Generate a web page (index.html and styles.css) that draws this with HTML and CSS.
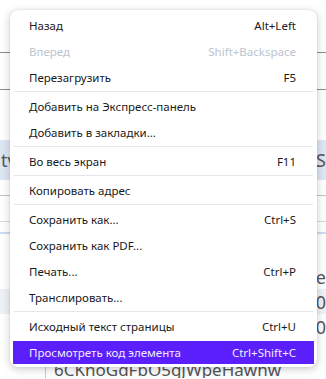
FILE: index.html
```html
<!DOCTYPE html>
<html lang="ru">
<head>
    <meta charset="UTF-8">
    <meta name="viewport" content="width=device-width, initial-scale=1.0">
    <title>Контекстное меню</title>
    <link rel="stylesheet" href="styles.css">
</head>
<body>
    <div class="page">
        <div class="bg">
            <div class="bg-top"></div>
            <div class="bg-row"></div>
            <div class="bg-gap"></div>
            <div class="bg-band"><span>tv</span><span>S</span></div>
            <div class="bg-line1"></div>
            <div class="bg-line2"></div>
            <div class="bg-blue"></div>
            <div class="bg-rows">
                <div class="bg-cell"><span>e</span></div>
                <div class="bg-cell gray"><span>0</span></div>
                <div class="bg-cell"><span>0</span></div>
            </div>
            <div class="bg-hash">6CKnoGdFbO5gJWpeHawhw</div>
        </div>

        <div class="menu">
            <div class="item"><span>Назад</span><span class="key">Alt+Left</span></div>
            <div class="item disabled"><span>Вперед</span><span class="key">Shift+Backspace</span></div>
            <div class="item"><span>Перезагрузить</span><span class="key">F5</span></div>
            <div class="sep"></div>
            <div class="item"><span>Добавить на Экспресс-панель</span></div>
            <div class="item"><span>Добавить в закладки...</span></div>
            <div class="sep"></div>
            <div class="item"><span>Во весь экран</span><span class="key">F11</span></div>
            <div class="sep"></div>
            <div class="item"><span>Копировать адрес</span></div>
            <div class="sep"></div>
            <div class="item"><span>Сохранить как...</span><span class="key">Ctrl+S</span></div>
            <div class="item"><span>Сохранить как PDF...</span></div>
            <div class="item"><span>Печать...</span><span class="key">Ctrl+P</span></div>
            <div class="item"><span>Транслировать...</span></div>
            <div class="sep"></div>
            <div class="item"><span>Исходный текст страницы</span><span class="key">Ctrl+U</span></div>
            <div class="item active"><span>Просмотреть код элемента</span><span class="key">Ctrl+Shift+C</span></div>
        </div>
    </div>
</body>
</html>
```

FILE: styles.css
```css
body { margin: 0; background: #ffffff; font-family: "Noto Sans", "Open Sans", sans-serif; }
.page { position: relative; width: 326px; height: 379px; overflow: hidden; }

/* page behind the menu */
.bg { display: flex; flex-direction: column; color: #555; }
.bg-top { height: 52px; border-bottom: 1px solid #8c8c8c; }
.bg-row { height: 36px; border-bottom: 1px solid #8c8c8c; }
.bg-gap { height: 50px; }
.bg-band { height: 40px; background: #dde6f3; display: flex; justify-content: space-between; align-items: center; font-size: 18px; padding: 0 0 0 1px; }
.bg-line1 { height: 15px; border-bottom: 1px solid #c4c4c4; }
.bg-line2 { height: 25px; border-bottom: 1px solid #d8d8d8; }
.bg-blue { height: 10px; border-bottom: 2px solid #cddcf1; }
.bg-rows { display: flex; flex-direction: column; margin-top: 30px; }
.bg-cell { height: 25px; display: flex; justify-content: flex-end; align-items: center; font-size: 18px; }
.bg-cell.gray { background: #eef1f6; }
.bg-hash { margin: 25px 0 0 45px; padding-left: 8px; border-left: 1px solid #c9c9c9; font-size: 17px; color: #555; height: 14px; line-height: 11px; overflow: hidden; }

/* context menu */
.menu { position: absolute; left: 10px; top: 10px; width: 301px; padding: 4px 3px 3px; background: #ffffff; border-radius: 8px; box-shadow: 0 2px 8px rgba(0, 0, 0, 0.22), 0 0 1px rgba(0, 0, 0, 0.2); font-size: 11.5px; color: #1a1a1a; }
.item { height: 23px; margin-top: 3px; padding: 0 18px 0 16px; display: flex; justify-content: space-between; align-items: center; white-space: nowrap; }
.item:first-child { margin-top: 0; }
.item.disabled { color: #bcc4cf; }
.item.active { background: #5a1ffb; color: #f1ecff; }
.sep { height: 1px; margin: 2px 1px 0; background: #e3e7ec; }
```
